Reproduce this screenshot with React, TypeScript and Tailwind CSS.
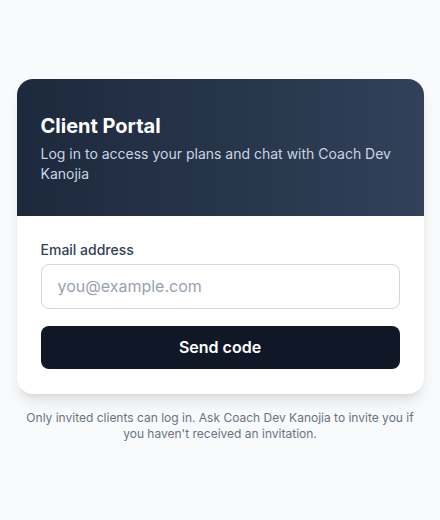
import React from 'react';

export default function App() {
  return (
    <div
      className="min-h-screen bg-gray-50 flex items-center justify-center px-4"
      style={{ fontFamily: 'Inter, "Noto Sans", sans-serif' }}
    >
      <div className="w-full max-w-[407px]">
        <div className="bg-white rounded-2xl shadow-lg overflow-hidden">
          {/* header */}
          <div className="bg-gradient-to-r from-slate-800 to-slate-700 px-6 pt-[33px] pb-8">
            <h1 className="text-xl font-bold text-white">Client Portal</h1>
            <p className="mt-1 text-sm text-slate-300">
              Log in to access your plans and chat with Coach Dev Kanojia
            </p>
          </div>

          {/* form */}
          <div className="px-6 pt-6 pb-[25px]">
            <label className="block text-sm font-medium text-slate-700 mb-1">Email address</label>
            <input
              type="email"
              placeholder="you@example.com"
              className="w-full h-[45px] px-4 border border-gray-300 rounded-lg text-base text-gray-900 placeholder:text-gray-400 focus:outline-none"
            />
            <button className="mt-[17px] w-full h-[43px] rounded-lg bg-gray-900 text-white text-base font-semibold">
              Send code
            </button>
          </div>
        </div>

        <p className="mt-4 text-xs text-gray-500 text-center leading-4 px-2">
          Only invited clients can log in. Ask Coach Dev Kanojia to invite you if you haven't received an invitation.
        </p>
      </div>
    </div>
  );
}
